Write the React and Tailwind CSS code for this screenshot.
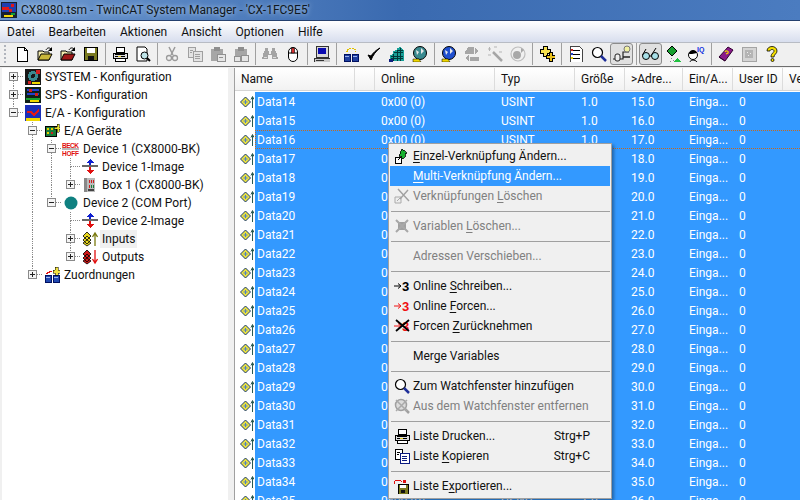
import React from "react";

const S = ({ children, w = 16, h = 16, crisp = false }) => (
  <svg width={w} height={h} viewBox={`0 0 ${w} ${h}`} shapeRendering={crisp ? "crispEdges" : undefined} className="block shrink-0">
    {children}
  </svg>
);

const Icons = {
  appLogo: () => (
    <S crisp>
      <rect width="16" height="16" fill="#17202e" />
      <rect x="1" y="1" width="14" height="9" fill="#1f3fb0" />
      <path d="M1 5h7v2h3v3H8V8H1zM10 2h3v3h-3z" fill="#e01818" />
      <path d="M3 13h9v2H3z" fill="#f5d90a" />
      <path d="M10 11h4v2h-4z" fill="#0e9b3a" />
    </S>
  ),
  newDoc: () => (
    <S crisp>
      <path d="M3 1h7l3 3v11H3z" fill="#fff" stroke="#000" />
      <path d="M10 1v3h3" fill="none" stroke="#000" />
    </S>
  ),
  open: ({ c = "#c9b63a" }) => (
    <S>
      <path d="M1 5h5l1 1h5v8H1z" fill="#f4ecb0" stroke="#000" />
      <path d="M1 14l3-6h11l-3 6z" fill={c} stroke="#000" />
      <path d="M9 4c1-2 3-3 5-1" fill="none" stroke="#000" />
      <path d="M15 1v4h-4z" fill="#000" />
    </S>
  ),
  save: () => (
    <S crisp>
      <rect x="1.500" y="1.500" width="13" height="13" fill="#7a7a20" stroke="#000" />
      <rect x="4" y="2" width="8" height="5" fill="#fff" />
      <rect x="5" y="10" width="6" height="4" fill="#111" />
    </S>
  ),
  print: () => (
    <S crisp>
      <path d="M4 1h8v5H4z" fill="#fff" stroke="#000" />
      <path d="M1 7h14v5H1z" fill="#ddd" stroke="#000" />
      <path d="M3 12h10v3H3z" fill="#fff" stroke="#000" />
      <path d="M3 8h10M3 10h10" stroke="#000" />
      <path d="M6 10h3v1H6z" fill="#e8d020" />
    </S>
  ),
  preview: () => (
    <S>
      <path d="M2 1h8l2 2v12H2z" fill="#fff" stroke="#000" />
      <circle cx="9.500" cy="9.500" r="3.500" fill="#bfe4e8" stroke="#000" />
      <path d="M12 12l3 3" stroke="#000" strokeWidth="2" />
    </S>
  ),
  cut: () => (
    <S>
      <path d="M5 1l4 8M11 1L7 9" stroke="#9a9a9a" strokeWidth="1.500" fill="none" />
      <circle cx="5" cy="12" r="2.500" fill="none" stroke="#9a9a9a" strokeWidth="1.300" />
      <circle cx="11" cy="12" r="2.500" fill="none" stroke="#9a9a9a" strokeWidth="1.300" />
    </S>
  ),
  copyGray: () => (
    <S crisp>
      <path d="M1 1h7v10H1z" fill="#e4e4e4" stroke="#a0a0a0" />
      <path d="M6 5h9v10H6z" fill="#e4e4e4" stroke="#a0a0a0" />
      <path d="M8 8h5M8 10h5M8 12h5M3 4h3M3 6h2" stroke="#a0a0a0" />
    </S>
  ),
  pasteGray: () => (
    <S crisp>
      <path d="M1 3h12v12H1z" fill="#a6a6a6" />
      <path d="M4 1h6v4H4z" fill="#8e8e8e" />
      <path d="M7 8h8v7H7z" fill="#e6e6e6" stroke="#909090" />
      <path d="M9 11h4" stroke="#909090" />
    </S>
  ),
  pasteLinkGray: () => (
    <S crisp>
      <path d="M2 3h12v7H2z" fill="#a6a6a6" />
      <path d="M5 1h6v4H5z" fill="#8e8e8e" />
      <path d="M1 10h6v5H1z" fill="#e6e6e6" stroke="#909090" />
      <path d="M8 9h7v6H8z" fill="#e6e6e6" stroke="#909090" />
    </S>
  ),
  binoculars: () => (
    <S crisp>
      <path d="M3 2h3v3h1v3h2V5h1V2h3v3h1l2 8H10V9H6v4H0l2-8h1z" fill="#a3a3a3" />
      <path d="M2 11h3v1H2zM11 11h3v1h-3z" fill="#dcdcdc" />
    </S>
  ),
  mouse: () => (
    <S>
      <rect x="3.500" y="1.500" width="9" height="14" rx="4.500" fill="#fff" stroke="#000" />
      <path d="M3.500 7h9" stroke="#000" />
      <rect x="6.500" y="2" width="3" height="5" fill="#d83030" stroke="#000" strokeWidth=".6" />
    </S>
  ),
  computer: () => (
    <S crisp>
      <path d="M2 0h12v11H2z" fill="#d8d8d8" stroke="#333" />
      <path d="M4 2h8v6H4z" fill="#0a0ab0" />
      <path d="M0 12h16v4H0z" fill="#c8c8c8" stroke="#333" />
      <path d="M2 14h8" stroke="#333" />
    </S>
  ),
  links: () => (
    <S crisp>
      <path d="M1 8h6v7H1zM9 8h6v7H9z" fill="#2040a0" stroke="#001060" />
      <path d="M2 10h4M10 10h4" stroke="#9fb4f0" />
      <path d="M3 5h1V3h2V2h4v1h2v2h1" fill="none" stroke="#e0c000" strokeDasharray="2 1" />
    </S>
  ),
  check: () => (
    <S>
      <path d="M2 9l3 5c2-5 5-9 9-12-4 2-7 5-9 8z" fill="#000" stroke="#000" strokeWidth="1" />
    </S>
  ),
  tower: () => (
    <S crisp>
      <path d="M1 15V9l3-1V5l4-1V2l3-1 4 3v11z" fill="#18a098" />
      <path d="M2 10h12M2 12h12M5 6h9M8 4h6M4 8v7M8 4v11M11 2v13" stroke="#003838" />
      <path d="M0 13h4v3H0z" fill="#102080" />
    </S>
  ),
  globeBad: ({ c = "#3a8a90" }) => (
    <S>
      <circle cx="8" cy="7" r="6.500" fill={c} stroke="#000" />
      <path d="M4 4l3 2-2 3zM9 2l3 3-3 3z" fill="#e8e8e8" />
      <path d="M1 13h6l2 3H1z" fill="#f0d800" stroke="#000" strokeWidth=".5" />
    </S>
  ),
  swapGray: () => (
    <S crisp>
      <path d="M4 1h6v4H2zM1 5h9v3H1z" fill="#a6a6a6" />
      <path d="M11 2l4 3-4 3zM5 9l-4 3 4 3z" fill="#a6a6a6" />
      <path d="M6 11h9v4H6z" fill="#a6a6a6" />
    </S>
  ),
  wand: () => (
    <S>
      <path d="M6 6l9 9" stroke="#a6a6a6" strokeWidth="2.500" />
      <path d="M1 3h3M2.500 1v4M7 1h3M12 6h3M1 9h3" stroke="#b5b5b5" />
    </S>
  ),
  reload: () => (
    <S>
      <circle cx="8" cy="8" r="7" fill="none" stroke="#bdbdbd" strokeWidth="1.200" />
      <circle cx="7" cy="9" r="4" fill="#a8a8a8" />
      <path d="M11 2v5l3-3z" fill="#a8a8a8" />
    </S>
  ),
  plusGold: () => (
    <S crisp>
      <path d="M4 0h4v3h3v4H8v3H4V7H1V3h3z" fill="#f5e050" stroke="#000" />
      <path d="M10 6h3v3h3v3h-3v3h-3v-3H7V9h3z" fill="#e8c020" stroke="#000" />
    </S>
  ),
  listRed: () => (
    <S crisp>
      <path d="M2 0h9l3 3v13H2z" fill="#fff" stroke="#444" />
      <path d="M5 4h7M5 8h7M5 12h7" stroke="#000" />
      <path d="M3 3h2v2H3z" fill="#d02020" />
      <path d="M3 7h2v2H3z" fill="#2040d0" />
      <path d="M3 11h2v2H3z" fill="#e8d000" />
    </S>
  ),
  magnifier: () => (
    <S>
      <circle cx="6.500" cy="6.500" r="5" fill="#fff" stroke="#000" strokeWidth="1.200" />
      <path d="M10 10l5 5" stroke="#20309a" strokeWidth="2.500" />
    </S>
  ),
  plugWatch: () => (
    <S w={20} h={18}>
      <path d="M1 14h2M8 14h3V7h6" fill="none" stroke="#222" strokeWidth="1.200" />
      <rect x="3" y="9" width="5" height="7" rx="2" fill="#eee" stroke="#222" />
      <circle cx="15" cy="4" r="3" fill="#f0f0a0" stroke="#777" />
      <path d="M11 12h7" stroke="#222" strokeWidth="1.500" />
    </S>
  ),
  glasses: () => (
    <S w={20} h={16}>
      <circle cx="5" cy="10" r="3.500" fill="#a8e0e8" stroke="#000" />
      <circle cx="14" cy="10" r="3.500" fill="#a8e0e8" stroke="#000" />
      <path d="M8.500 10h2M1.500 9L5 3M10.500 9L15 2" fill="none" stroke="#000" />
    </S>
  ),
  diamonds: () => (
    <S crisp>
      <path d="M6 0l5 5-5 5-5-5z" fill="#18a030" stroke="#000" />
      <path d="M11 12l4 4H7z" fill="#20c040" />
      <path d="M5 12h1v1H5zM7 14h1v1H7zM4 15h1v1H4z" fill="#888" />
    </S>
  ),
  headIq: () => (
    <S w={20} h={18}>
      <circle cx="6" cy="10" r="4.500" fill="#fff" stroke="#000" />
      <path d="M2 9c0-4 7-5 8-1L5 9z" fill="#000" />
      <path d="M3 17c0-2 5-3 7 0" fill="none" stroke="#000" />
      <text x="10" y="6.500" fontSize="7" fill="#1030e0" fontFamily="Liberation Sans" fontWeight="700">IQ</text>
    </S>
  ),
  book: () => (
    <S>
      <path d="M1 11L10 1l5 3-8 11z" fill="#8a1a8a" stroke="#300030" />
      <path d="M1 11l6 4" stroke="#300030" strokeWidth="1" />
      <path d="M7 6c1-2 4-1 3 1l-2 1" fill="none" stroke="#f0d800" strokeWidth="1.200" />
    </S>
  ),
  chipGray: () => (
    <S crisp>
      <path d="M1 1h14v14H1z" fill="#d4d4d4" stroke="#a4a4a4" />
      <path d="M4 4h8v8H4z" fill="#b4b4b4" />
      <path d="M6 6h1v1H6zM9 7h1v1H9zM7 9h1v1H7z" fill="#eee" />
    </S>
  ),
  help: () => (
    <S>
      <path d="M3 5c0-6 10-6 10 0 0 3-3 3-3 6H7c0-4 3-4 3-6s-4-2-4 0z" fill="#f5e000" stroke="#000" strokeWidth=".8" />
      <circle cx="8.500" cy="14" r="1.500" fill="#f5e000" stroke="#000" strokeWidth=".8" />
    </S>
  ),
  sys: () => (
    <S crisp>
      <rect width="16" height="16" fill="#181818" />
      <circle cx="8" cy="7" r="5" fill="#3a8a90" />
      <circle cx="8" cy="7" r="2" fill="#181818" />
      <path d="M3 12h3v3H3z" fill="#d02020" />
      <path d="M11 1h4v4h-4z" fill="#d02020" />
      <path d="M7 13h8v2H7z" fill="#f0d800" />
    </S>
  ),
  sps: () => (
    <S crisp>
      <rect width="16" height="16" fill="#102018" />
      <path d="M2 3h12M2 7h12" stroke="#2040d0" strokeWidth="2" />
      <path d="M4 2h3v3H4zM10 6h3v3h-3z" fill="#d02020" />
      <path d="M1 11h14v2H1z" fill="#18a030" />
      <path d="M5 13h9v2H5z" fill="#f0d800" />
    </S>
  ),
  ea: () => (
    <S crisp>
      <rect width="16" height="16" fill="#1b2fb8" />
      <path d="M2 6h5l2 3 5-6v3l-5 6-3-4H2z" fill="#e01818" />
      <path d="M1 13h14v3H1z" fill="#f0d800" />
    </S>
  ),
  eaDevices: () => (
    <S crisp>
      <path d="M1 3h11v10H1z" fill="#1a7a3a" stroke="#000" />
      <path d="M3 5h2v2H3zM7 5h2v2H7zM3 9h2v2H3z" fill="#e8d000" />
      <path d="M7 9h2v2H7z" fill="#d02020" />
      <path d="M10 4h3V1h2v3h1v2h-1v3h-2V6h-3z" fill="#e8e030" stroke="#000" strokeWidth=".5" />
    </S>
  ),
  beckhoff: () => (
    <svg width="17" height="16" viewBox="0 0 17 16" className="block shrink-0">
      <text x="0" y="7" fontSize="6.500" fontWeight="700" fill="#e01010" fontFamily="Liberation Sans" textLength="17">BECK</text>
      <rect x="0" y="7.500" width="17" height="1" fill="#777" />
      <text x="0" y="15" fontSize="6.500" fontWeight="700" fill="#e01010" fontFamily="Liberation Sans" textLength="17">HOFF</text>
    </svg>
  ),
  image: () => (
    <S crisp>
      <path d="M8 0l4 4H9v2H7V4H4z" fill="#1020d0" />
      <path d="M0 6h16v2H0z" fill="#666" />
      <path d="M8 15l4-4H9V8H7v3H4z" fill="#e01010" />
    </S>
  ),
  box: () => (
    <S crisp>
      <rect x="2" y="1" width="11" height="14" fill="#bbb" />
      <path d="M2 1h3v14H2z" fill="#888" />
      <path d="M7 3h1v3H7zM9 3h1v3H9zM11 3h1v3h-1zM7 8h1v3H7z" fill="#d02020" />
      <path d="M9 8h1v3H9zM11 8h1v3h-1z" fill="#1a7a3a" />
      <path d="M6 12h6v2H6z" fill="#444" />
    </S>
  ),
  comPort: () => (
    <S>
      <circle cx="8" cy="8" r="6.500" fill="#0f8080" />
    </S>
  ),
  inputs: () => (
    <S>
      <path d="M1 5l4-4 4 4-4 4zM1 9l4-4 4 4-4 4zM1 12l4-3 4 3-4 3z" fill="#e8d820" stroke="#000" strokeWidth=".8" />
      <path d="M13 15V3M10.500 6L13 2l2.500 4" fill="none" stroke="#7a7a10" strokeWidth="1.300" />
    </S>
  ),
  outputs: () => (
    <S>
      <path d="M1 5l4-4 4 4-4 4zM1 9l4-4 4 4-4 4zM1 12l4-3 4 3-4 3z" fill="#d01818" stroke="#000" strokeWidth=".8" />
      <path d="M13 1v12M10.500 10l2.500 4 2.500-4" fill="none" stroke="#e01010" strokeWidth="1.300" />
    </S>
  ),
  mappings: () => (
    <S crisp>
      <path d="M1 8h6v7H1zM9 8h6v7H9z" fill="#2048b0" stroke="#001060" />
      <path d="M2 10h4M10 10h4" stroke="#9fb4f0" />
      <path d="M2 6h1V5h2V4h3" fill="none" stroke="#e01010" />
      <path d="M11 0h3v3h2v3h-2v2h-3V6H9V3h2z" fill="#f0e040" stroke="#000" strokeWidth=".5" />
    </S>
  ),
  varIn: () => (
    <S w={14} h={14}>
      <path d="M.5 7L5.500 2 10.500 7 5.500 12z" fill="#e8e040" stroke="#1a3a70" strokeWidth="1" />
      <path d="M3.500 7h4M5.500 5v4" stroke="#5080c0" strokeWidth="1" />
      <path d="M12.500 13V2M11 4.500l1.500-3 1.500 3" fill="none" stroke="#2a5a50" strokeWidth="1" />
    </S>
  ),
  einzel: () => (
    <S crisp>
      <path d="M1 9h6v6H1z" fill="#fff" stroke="#000" />
      <path d="M4 12l3-3" stroke="#000" />
      <path d="M8 1l5 4-2 1v3l-4 3V8H5z" fill="#18b030" stroke="#000" strokeWidth=".8" />
    </S>
  ),
  linkDel: () => (
    <S>
      <path d="M1 9h6v6H1z" fill="#eee" stroke="#aaa" />
      <path d="M3 13l3-3" stroke="#aaa" />
      <path d="M4 1l11 12M14 2L6 11" stroke="#a0a0a0" strokeWidth="1.400" />
    </S>
  ),
  varDel: () => (
    <S>
      <path d="M4 4h8v8H4z" fill="#a0a0a0" />
      <path d="M2 2l12 12M14 2L2 14" stroke="#a8a8a8" strokeWidth="2" />
    </S>
  ),
  three: ({ c }) => (
    <svg width="16" height="14" viewBox="0 0 16 14" className="block shrink-0">
      <path d="M0 7h6M4 4.500L7 7 4 9.500" fill="none" stroke={c} strokeWidth="1" />
      <text x="8" y="12" fontSize="13" fontWeight="700" fontFamily="Liberation Sans" fill={c}>3</text>
    </svg>
  ),
  forced: () => (
    <svg width="16" height="14" viewBox="0 0 16 14" className="block shrink-0">
      <path d="M0 7h6M4 4.500L7 7 4 9.500" fill="none" stroke="#f01010" strokeWidth="1" />
      <text x="8" y="12" fontSize="13" fontWeight="700" fontFamily="Liberation Sans" fill="#f01010">3</text>
      <path d="M2 1l13 11M15 1L2 12" stroke="#000" strokeWidth="1.800" />
    </svg>
  ),
  watchDel: () => (
    <S>
      <circle cx="7" cy="7" r="5.500" fill="#dcdcdc" stroke="#a0a0a0" strokeWidth="1.500" />
      <path d="M11 11l4 4" stroke="#a0a0a0" strokeWidth="2.500" />
      <path d="M2 2l11 11M13 2L2 13" stroke="#aaa" strokeWidth="1.500" />
    </S>
  ),
  copy: () => (
    <S crisp>
      <path d="M1 1h7v10H1z" fill="#fff" stroke="#000" />
      <path d="M6 5h9v10H6z" fill="#fff" stroke="#0a1a80" />
      <path d="M8 8h5M8 10h5M8 12h5" stroke="#0a1a80" />
      <path d="M3 4h3M3 6h2" stroke="#000" />
    </S>
  ),
  exportIc: () => (
    <S crisp>
      <rect x="4" y="6" width="10" height="10" fill="#7a7a20" stroke="#000" />
      <rect x="6" y="7" width="6" height="3" fill="#fff" />
      <path d="M7 12h4v3H7z" fill="#111" />
      <path d="M0 6V4l2-2h3l2 1h1" fill="none" stroke="#e01010" />
      <path d="M9 2h3v3H9z" fill="#e01010" />
    </S>
  ),
};

const toolbar = [
  [["newDoc"], ["open"], ["open", { c: "#a01818" }], ["save"]],
  [["print"], ["preview"]],
  [["cut"], ["copyGray"], ["pasteGray"], ["pasteLinkGray"]],
  [["binoculars"], ["mouse"]],
  [["computer"]],
  [["links"], ["check"], ["tower"], ["globeBad"]],
  [["globeBad", { c: "#2050d0" }], ["swapGray"], ["wand"], ["reload"]],
  [["plusGold"]],
  [["listRed"], ["magnifier"], ["plugWatch", {}, "toggled"]],
  [["glasses", {}, "toggled"], ["diamonds"], ["headIq"]],
  [["book"], ["chipGray"], ["help"]],
];

const Ic = ({ name, ...p }) => {
  const C = Icons[name];
  return <C {...p} />;
};

function Connector({ kind }) {
  const up = ["pipe", "tee", "tp", "tm", "ep", "em"].includes(kind);
  const down = ["pipe", "tee", "tp", "tm", "fp"].includes(kind);
  const right = kind !== "pipe" && kind !== "blank";
  const box = ["tp", "tm", "ep", "em", "fp"].includes(kind);
  const plus = ["tp", "ep", "fp"].includes(kind);
  return (
    <svg width="19" height="18" viewBox="0 0 19 18" shapeRendering="crispEdges" className="block shrink-0">
      <g stroke="#8a8a8a" strokeDasharray="1 1">
        {up && <path d="M9.500 0v9" />}
        {down && <path d="M9.500 9v9" />}
        {right && <path d="M10 8.500h9" />}
      </g>
      {box && (
        <g>
          <rect x="5.500" y="4.500" width="8" height="8" fill="#f4f4f4" stroke="#8a8a8a" />
          <path d="M7 8.500h5" stroke="#222" />
          {plus && <path d="M9.500 6v5" stroke="#222" />}
        </g>
      )}
    </svg>
  );
}

const tree = [
  { c: ["fp"], i: "sys", t: "SYSTEM - Konfiguration" },
  { c: ["tp"], i: "sps", t: "SPS - Konfiguration" },
  { c: ["em"], i: "ea", t: "E/A - Konfiguration" },
  { c: ["blank", "tm"], i: "eaDevices", t: "E/A Geräte" },
  { c: ["blank", "pipe", "tm"], i: "beckhoff", t: "Device 1 (CX8000-BK)" },
  { c: ["blank", "pipe", "pipe", "tee"], i: "image", t: "Device 1-Image" },
  { c: ["blank", "pipe", "pipe", "ep"], i: "box", t: "Box 1 (CX8000-BK)" },
  { c: ["blank", "pipe", "em"], i: "comPort", t: "Device 2 (COM Port)" },
  { c: ["blank", "pipe", "blank", "tee"], i: "image", t: "Device 2-Image" },
  { c: ["blank", "pipe", "blank", "tp"], i: "inputs", t: "Inputs", hover: true },
  { c: ["blank", "pipe", "blank", "ep"], i: "outputs", t: "Outputs" },
  { c: ["blank", "ep"], i: "mappings", t: "Zuordnungen" },
];

const columns = [
  ["Name", "w-[120px]"],
  ["", "w-[20px]"],
  ["Online", "w-[120px]"],
  ["Typ", "w-[80px]"],
  ["Größe", "w-[50px]"],
  [">Adre...", "w-[58px]"],
  ["Ein/A...", "w-[50px]"],
  ["User ID", "w-[50px]"],
  ["Ve", "w-[40px]"],
];

const rows = Array.from({ length: 22 }, (_, k) => ({ name: `Data${14 + k}`, addr: `${15 + k}.0` }));

const U = ({ children }) => <span className="underline underline-offset-2">{children}</span>;

const menu = [
  { i: ["einzel"], t: <><U>E</U>inzel-Verknüpfung Ändern...</> },
  { t: <><U>M</U>ulti-Verknüpfung Ändern...</>, active: true },
  { i: ["linkDel"], t: <>Verknüpfungen <U>L</U>öschen</>, off: true },
  "sep",
  { i: ["varDel"], t: <>Variablen <U>L</U>öschen...</>, off: true },
  "sep",
  { t: "Adressen Verschieben...", off: true },
  "sep",
  { i: ["three", { c: "#000" }], t: <>Online <U>S</U>chreiben...</> },
  { i: ["three", { c: "#f01010" }], t: <>Online <U>F</U>orcen...</> },
  { i: ["forced"], t: <>Forcen <U>Z</U>urücknehmen</> },
  "sep",
  { t: "Merge Variables" },
  "sep",
  { i: ["magnifier"], t: "Zum Watchfenster hinzufügen" },
  { i: ["watchDel"], t: "Aus dem Watchfenster entfernen", off: true },
  "sep",
  { i: ["print"], t: "Liste Drucken...", k: "Strg+P" },
  { i: ["copy"], t: <>Liste <U>K</U>opieren</>, k: "Strg+C" },
  "sep",
  { i: ["exportIc"], t: <>Liste E<U>x</U>portieren...</> },
];

export default function App() {
  return (
    <div className="relative flex h-[500px] w-[800px] flex-col overflow-hidden bg-[#f0f0f0] font-['Roboto',sans-serif] text-[12px] leading-none text-[#111]">
      <div className="flex h-[21px] shrink-0 items-center gap-[4px] border-b border-[#24406e] bg-gradient-to-r from-[#6f9ad0] via-[#3a6ab0] to-[#4b7cc0] pl-[1px]">
        <Ic name="appLogo" />
        <span className="text-[#101820] [text-shadow:0_0_5px_#cfe0f5]">CX8080.tsm - TwinCAT System Manager - 'CX-1FC9E5'</span>
      </div>
      <div className="flex h-[21px] shrink-0 items-center gap-[14px] bg-gradient-to-b from-[#ffffff] to-[#d8deee] pl-[7px]">
        {["Datei", "Bearbeiten", "Aktionen", "Ansicht", "Optionen", "Hilfe"].map((m) => (
          <span key={m}>{m}</span>
        ))}
      </div>
      <div className="flex h-[25px] shrink-0 items-center border-t border-[#b8bcc4] border-b border-b-[#6e6e6e] bg-[#f0f0f0] pb-[1px] pl-[4px]">
        <div className="mr-[4px] h-[18px] w-[2px] shrink-0 border-l-2 border-dotted border-[#b0b4bc]" />
        {toolbar.map((group, gi) => (
          <React.Fragment key={gi}>
            {gi > 0 && (
              <div className="flex h-[22px] w-[6px] shrink-0 justify-center">
                <div className="h-full w-px bg-[#a0a0a0]" />
              </div>
            )}
            {group.map(([n, p, st], i) =>
              st ? (
                <div key={i} className="flex h-[22px] w-[23px] shrink-0 items-center justify-center rounded-[3px] border border-[#8c8c8c] bg-[#e0e0e0]">
                  <Ic name={n} {...p} />
                </div>
              ) : (
                <div key={i} className="flex h-[22px] w-[23px] shrink-0 items-center justify-center">
                  <Ic name={n} {...p} />
                </div>
              )
            )}
          </React.Fragment>
        ))}
      </div>

      <div className="flex min-h-0 flex-1 pt-[1px]">
        <div className="ml-[2px] flex w-[226px] shrink-0 flex-col bg-white pl-[2px]">
          {tree.map((n) => (
            <div key={n.t} className="flex h-[18px] items-center">
              {n.c.map((k, idx) => (
                <Connector key={idx} kind={k} />
              ))}
              <div className="flex w-[19px] shrink-0 justify-center">
                <Ic name={n.i} />
              </div>
              {n.hover ? (
                <span className="ml-[1px] flex h-[18px] w-[37px] items-center bg-[#f0f0f0] pl-[2px] whitespace-nowrap">{n.t}</span>
              ) : (
                <span className="ml-[3px] whitespace-nowrap">{n.t}</span>
              )}
            </div>
          ))}
        </div>
        <div className="w-[6px] shrink-0" />
        <div className="flex min-w-0 flex-1 flex-col overflow-hidden border-l border-[#a0a0a0] bg-white">
          <div className="flex h-[23px] shrink-0 border-b border-[#d5d5d5] bg-gradient-to-b from-[#ffffff] to-[#f2f2f2]">
            {columns.map(([t, w], ci) => (
              <div key={ci} className={`${w} flex shrink-0 items-center border-r border-[#dcdcdc] pl-[6px] whitespace-nowrap`}>
                {t}
              </div>
            ))}
          </div>
          <div className="h-[1px] shrink-0" />
          {rows.map((r, idx) => (
            <div key={r.name} className="flex h-[19px] shrink-0 items-center">
              <div className="flex h-full w-[20px] shrink-0 items-center pl-[5px]">
                <Ic name="varIn" />
              </div>
              <div className={`flex h-full flex-1 items-center bg-[#3399ff] text-white ${idx === 2 ? "border-y border-l border-dotted border-[#c8681a]" : ""}`}>
                <span className={`shrink-0 ${idx === 2 ? "w-[119px] pl-[1px]" : "w-[120px] pl-[2px]"}`}>{r.name}</span>
                <span className="w-[120px] shrink-0 pl-[6px]">0x00 (0)</span>
                <span className="w-[80px] shrink-0 pl-[6px]">USINT</span>
                <span className="w-[50px] shrink-0 pl-[6px]">1.0</span>
                <span className="w-[58px] shrink-0 pl-[6px]">{r.addr}</span>
                <span className="w-[50px] shrink-0 pl-[6px]">Einga...</span>
                <span className="w-[50px] shrink-0 pl-[6px]">0</span>
              </div>
            </div>
          ))}
        </div>
      </div>

      <div className="absolute left-[388px] top-[143px] flex w-[224px] flex-col border border-[#a0a0a0] bg-[#f0f0f0] px-[1px] py-[2px] shadow-[2px_2px_3px_rgba(0,0,0,0.35)]">
        {menu.map((m, i) =>
          m === "sep" ? (
            <div key={i} className="flex h-[10px] items-center pl-[1px]">
              <div className="h-px w-full bg-[#a0a0a0]" />
            </div>
          ) : (
            <div
              key={i}
              className={`flex h-[20px] items-center ${m.active ? "bg-[#3399ff] text-white" : m.off ? "text-[#808080]" : "text-[#111]"}`}
            >
              <div className="flex w-[23px] shrink-0 justify-center">{m.i && <Ic name={m.i[0]} {...m.i[1]} />}</div>
              <span className="flex-1 whitespace-nowrap">{m.t}</span>
              {m.k && <span className="pr-[20px]">{m.k}</span>}
            </div>
          )
        )}
      </div>
    </div>
  );
}
